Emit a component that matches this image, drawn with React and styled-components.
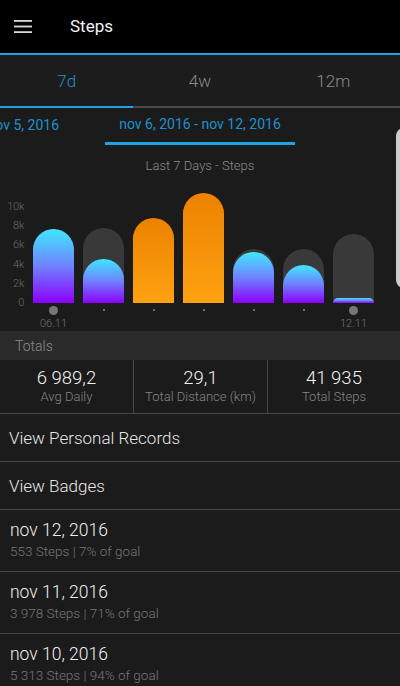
import React from "react";
import styled, { createGlobalStyle } from "styled-components";

const GlobalStyle = createGlobalStyle`
  html, body { margin: 0; padding: 0; background: #1b1b1b; }
  body { font-family: Roboto, "Noto Sans", "Liberation Sans", sans-serif; overflow: hidden; }
  * { box-sizing: border-box; }
`;

const BLUE_LINE = "#1ba3e6";
const BLUE_TEXT = "#1e90cf";

const Screen = styled.div`
  position: relative;
  width: 400px;
  height: 686px;
  overflow: hidden;
  background: #1b1b1b;
  color: #eee;
`;

const Header = styled.header`
  height: 55px;
  background: #000;
  border-bottom: 2px solid ${BLUE_LINE};
  display: flex;
  align-items: center;
  padding-left: 14px;
  gap: 38px;
`;

const Title = styled.h1`
  margin: 0;
  font-size: 17px;
  font-weight: 400;
  color: #f2f2f2;
  padding-bottom: 1px;
`;

const Tabs = styled.nav`
  display: grid;
  grid-template-columns: repeat(3, 1fr);
  height: 51px;
  background: #1c1c1c;
`;

const Tab = styled.div`
  display: flex;
  align-items: center;
  justify-content: center;
  font-size: 17px;
  font-weight: 300;
  color: ${(p) => (p.$active ? BLUE_TEXT : "#8a8a8a")};
`;

const TabTrack = styled.div`
  height: 2px;
  background: #4a4a4a;
  display: flex;
`;

const TabIndicator = styled.div`
  width: 133px;
  background: ${BLUE_LINE};
`;

const DateRow = styled.div`
  display: grid;
  grid-template-columns: 105px 190px 1fr;
  height: 37px;
`;

const SideDate = styled.div`
  font-size: 14px;
  color: ${BLUE_TEXT};
  white-space: nowrap;
  overflow: hidden;
  display: flex;
  justify-content: flex-end;
  align-items: center;
  padding-right: 46px;
  padding-bottom: 4px;
`;

const CenterDate = styled.div`
  font-size: 14px;
  color: ${BLUE_TEXT};
  white-space: nowrap;
  display: flex;
  justify-content: center;
  align-items: center;
  padding-bottom: 2px;
  border-bottom: 3px solid ${BLUE_LINE};
`;

const ChartTitle = styled.div`
  text-align: center;
  font-size: 13px;
  font-weight: 300;
  color: #8a8a8a;
  margin-top: 13px;
  height: 16px;
  line-height: 16px;
`;

const Chart = styled.div`
  display: flex;
  padding-top: 14px;
  padding-left: 4px;
`;

const Axis = styled.div`
  width: 20px;
  height: 121px;
  display: flex;
  flex-direction: column;
  justify-content: space-between;
  align-items: flex-end;
  padding-top: 13px;
`;

const AxisLabel = styled.span`
  font-size: 11px;
  font-weight: 300;
  line-height: 12px;
  color: #6a6a6a;
  letter-spacing: -0.3px;
`;

const Columns = styled.div`
  display: flex;
  gap: 9px;
  margin-left: 9px;
`;

const Column = styled.div`
  width: 41px;
  display: flex;
  flex-direction: column;
  align-items: center;
`;

const Plot = styled.div`
  height: 115px;
  flex-shrink: 0;
  width: 41px;
  display: grid;
  align-items: end;
`;

const Stack = styled.div`
  grid-area: 1 / 1;
  border-radius: 20.5px 20.5px 0 0;
  background: ${(p) =>
    p.$kind === "goal"
      ? "#393939"
      : p.$kind === "orange"
      ? "linear-gradient(180deg, #ec8200 0%, #fea211 100%)"
      : "linear-gradient(180deg, #40e8ff 0%, #6f82ff 50%, #8c00ff 100%)"};
`;

const DotSlot = styled.div`
  height: 14px;
  display: flex;
  align-items: center;
  justify-content: center;
`;

const Dot = styled.span`
  display: block;
  width: ${(p) => (p.$big ? 9 : 2)}px;
  height: ${(p) => (p.$big ? 9 : 2)}px;
  border-radius: 50%;
  background: ${(p) => (p.$big ? "#777" : "#8a8a8a")};
`;

const DayLabel = styled.span`
  font-size: 11px;
  font-weight: 300;
  color: #737373;
  height: 13px;
  line-height: 13px;
  white-space: nowrap;
`;

const SectionHeader = styled.div`
  height: 29px;
  background: #2a2a2a;
  display: flex;
  align-items: center;
  padding-left: 15px;
  font-size: 14px;
  font-weight: 300;
  color: #8a8a8a;
  margin-top: 1px;
`;

const Stats = styled.div`
  display: grid;
  grid-template-columns: 133px 134px 1fr;
  height: 54px;
  border-bottom: 1px solid #464646;
`;

const Stat = styled.div`
  display: flex;
  flex-direction: column;
  align-items: center;
  justify-content: center;
  border-left: ${(p) => (p.$first ? "none" : "1px solid #464646")};
  padding-bottom: 2px;
`;

const StatValue = styled.span`
  font-size: 18.5px;
  font-weight: 300;
  color: #f0f0f0;
  line-height: 22px;
`;

const StatLabel = styled.span`
  font-size: 13px;
  font-weight: 300;
  color: #858585;
  line-height: 16px;
`;

const LinkRow = styled.div`
  height: 48px;
  display: flex;
  align-items: center;
  padding-left: 9px;
  font-size: 17px;
  font-weight: 300;
  color: #e6e6e6;
  border-bottom: 1px solid #464646;
`;

const DayRow = styled.div`
  height: 62px;
  display: flex;
  flex-direction: column;
  justify-content: center;
  padding-left: 10px;
  border-bottom: 1px solid #464646;
  padding-bottom: 1px;
`;

const DayTitle = styled.span`
  font-size: 17.5px;
  font-weight: 300;
  color: #f0f0f0;
  line-height: 22px;
`;

const DaySub = styled.span`
  font-size: 13.5px;
  font-weight: 300;
  color: #777;
  line-height: 20px;
`;

const EdgeHandle = styled.div`
  position: absolute;
  left: 396px;
  top: 128px;
  width: 20px;
  height: 160px;
  border-radius: 8px;
  background: #cdcdcd;
`;

const Menu = () => (
  <svg width="18" height="13" viewBox="0 0 18 13">
    <rect x="0" y="0" width="18" height="1.8" fill="#d8d8d8" />
    <rect x="0" y="5.6" width="18" height="1.8" fill="#d8d8d8" />
    <rect x="0" y="11.2" width="18" height="1.8" fill="#d8d8d8" />
  </svg>
);

const SCALE = 9.6; // px per 1000 steps

const bars = [
  { value: 7750, goal: 7750, kind: "blue", label: "06.11" },
  { value: 4550, goal: 7800, kind: "blue" },
  { value: 8900, goal: 7000, kind: "orange" },
  { value: 11500, goal: 7000, kind: "orange" },
  { value: 5313, goal: 5650, kind: "blue" },
  { value: 3978, goal: 5600, kind: "blue" },
  { value: 553, goal: 7200, kind: "blue", label: "12.11" },
];

const days = [
  ["nov 12, 2016", "553 Steps | 7% of goal"],
  ["nov 11, 2016", "3 978 Steps | 71% of goal"],
  ["nov 10, 2016", "5 313 Steps | 94% of goal"],
];

export default function App() {
  return (
    <Screen>
      <GlobalStyle />
      <Header>
        <Menu />
        <Title>Steps</Title>
      </Header>
      <Tabs>
        <Tab $active>7d</Tab>
        <Tab>4w</Tab>
        <Tab>12m</Tab>
      </Tabs>
      <TabTrack>
        <TabIndicator />
      </TabTrack>
      <DateRow>
        <SideDate>nov 5, 2016</SideDate>
        <CenterDate>nov 6, 2016 - nov 12, 2016</CenterDate>
        <div />
      </DateRow>
      <ChartTitle>Last 7 Days - Steps</ChartTitle>
      <Chart>
        <Axis>
          {["10k", "8k", "6k", "4k", "2k", "0"].map((t) => (
            <AxisLabel key={t}>{t}</AxisLabel>
          ))}
        </Axis>
        <Columns>
          {bars.map((b, i) => (
            <Column key={i}>
              <Plot>
                {b.goal > b.value && (
                  <Stack $kind="goal" style={{ height: `${(b.goal / 1000) * SCALE}px` }} />
                )}
                <Stack $kind={b.kind} style={{ height: `${(b.value / 1000) * SCALE}px` }} />
              </Plot>
              <DotSlot>
                <Dot $big={!!b.label} />
              </DotSlot>
              <DayLabel>{b.label || "\u00a0"}</DayLabel>
            </Column>
          ))}
        </Columns>
      </Chart>
      <SectionHeader>Totals</SectionHeader>
      <Stats>
        <Stat $first>
          <StatValue>6 989,2</StatValue>
          <StatLabel>Avg Daily</StatLabel>
        </Stat>
        <Stat>
          <StatValue>29,1</StatValue>
          <StatLabel>Total Distance (km)</StatLabel>
        </Stat>
        <Stat>
          <StatValue>41 935</StatValue>
          <StatLabel>Total Steps</StatLabel>
        </Stat>
      </Stats>
      <LinkRow>View Personal Records</LinkRow>
      <LinkRow>View Badges</LinkRow>
      {days.map(([t, s]) => (
        <DayRow key={t}>
          <DayTitle>{t}</DayTitle>
          <DaySub>{s}</DaySub>
        </DayRow>
      ))}
      <EdgeHandle />
    </Screen>
  );
}
